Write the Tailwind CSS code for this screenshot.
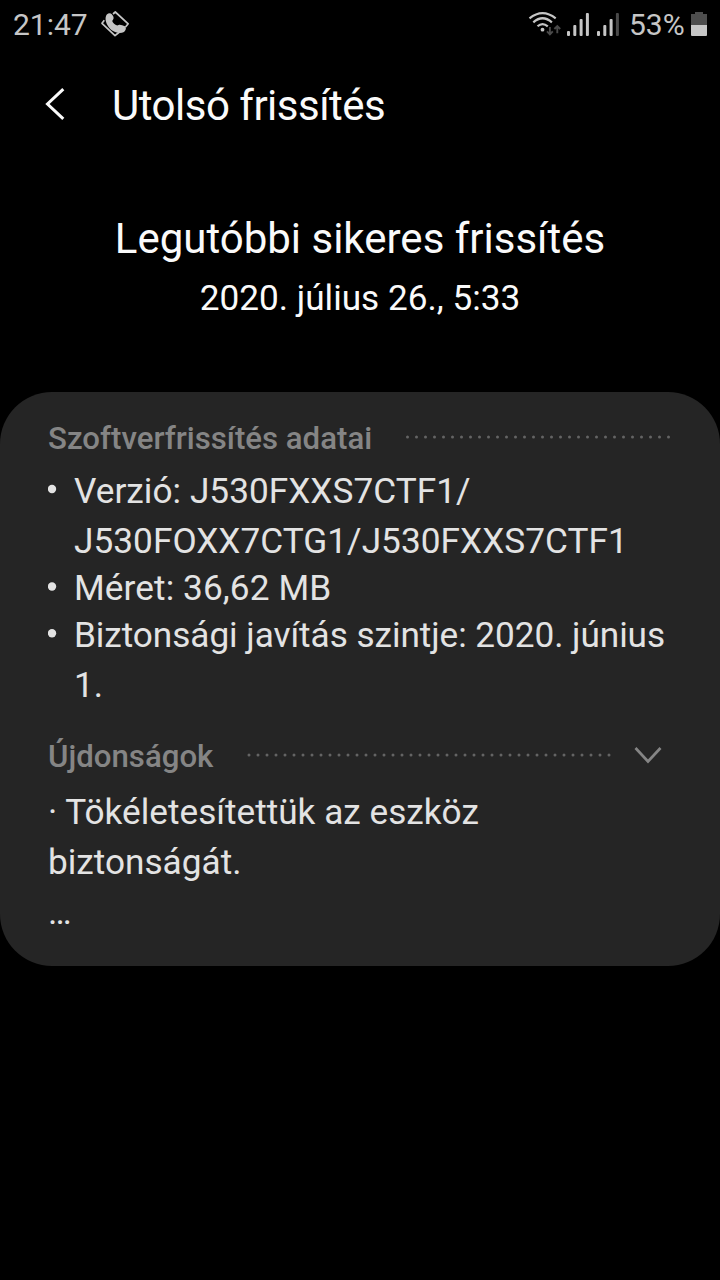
<!DOCTYPE html>
<html lang="hu">
<head>
<meta charset="utf-8">
<title>Utolsó frissítés</title>
<script src="https://cdn.jsdelivr.net/npm/@tailwindcss/browser@4"></script>
</head>
<body class="bg-black">
<div class="flex h-[1280px] w-[720px] flex-col overflow-hidden bg-black font-['Roboto',sans-serif] text-[#fafafa]">
  <div class="flex h-[50px] shrink-0 items-center justify-between pl-[13px] pr-3 text-[30px] leading-[50px] text-[#c6c6c6]">
    <div class="flex h-[50px]">
      <span class="w-[86px]">21:47</span>
      <svg class="h-[50px] w-[32px]" viewBox="99 0 32 50" fill="none">
        <path d="M113 14 115.3 12 128.2 23.8 125.5 27M104.3 20.3 102 23.3 115 35.7 119.5 32" stroke="#c6c6c6" stroke-width="1.7" stroke-linejoin="round"/>
        <path d="M106.8 14.6C108.3 13 110.5 12.8 111.8 14.2C113.6 15.9 114.2 18.3 113 19.8L112.2 21C113 23 114.8 24.6 117.2 25.6L118.6 25C120.5 24.2 122.6 25.8 124.9 26.2C126.6 27.2 126 30.4 124 31.9C119.3 34.6 112 31.8 108.6 27C105.6 22.8 104.5 18 106.8 14.6Z" fill="#c6c6c6"/>
      </svg>
    </div>
    <div class="flex h-[50px]">
      <svg class="h-[50px] w-[101px]" viewBox="528 0 101 50" fill="none">
        <g stroke="#c6c6c6" stroke-width="2.2">
          <path d="M529.5 18.3Q542.5 7.8 555.7 18.3M533.3 22.3Q542.5 14.2 551.9 22.3M537.5 26.3Q542.5 21.8 547.8 26.3"/>
        </g>
        <circle cx="542.5" cy="29.7" r="1.9" fill="#c6c6c6"/>
        <g stroke="#4a4a4a" stroke-width="1.9">
          <path d="M549.9 27V34M547 31.3 549.9 34.3 552.8 31.3M557.3 33.2V26.5M554.4 29 557.3 26 560.2 29"/>
        </g>
        <g fill="#c6c6c6">
          <rect x="567" y="31" width="3" height="5" rx="1"/><rect x="573.3" y="25" width="3" height="11" rx="1"/><rect x="579.6" y="19" width="3" height="17" rx="1"/><rect x="585.9" y="13" width="3" height="23" rx="1"/>
          <rect x="597" y="31" width="3" height="5" rx="1"/><rect x="603.3" y="25" width="3" height="11" rx="1"/><rect x="609.6" y="19" width="3" height="17" rx="1"/>
        </g>
        <rect x="615.9" y="13" width="3" height="23" rx="1" fill="#4a4a4a"/>
      </svg>
      <span class="w-[60px]">53%</span>
      <svg class="h-[50px] w-[19px]" viewBox="689 0 19 50">
        <path d="M695 12h8v2h4v11h-16v-11h4z" fill="#4d4d4d"/>
        <path d="M691 25h16v10q0 1-1 1h-14q-1 0-1-1z" fill="#c6c6c6"/>
      </svg>
    </div>
  </div>

  <header class="flex h-[111px] shrink-0 items-center pl-[42px]">
    <svg class="h-[111px] w-[70px]" viewBox="42 50 70 111" fill="none">
      <path d="M63.3 89.2 47.5 104 63.3 118.8" stroke="#fafafa" stroke-width="3"/>
    </svg>
    <h1 class="text-[42px] leading-[50px] tracking-[-0.5px]">Utolsó frissítés</h1>
  </header>

  <div class="flex h-[231px] shrink-0 flex-col items-center gap-[9px] pt-[53px]">
    <h2 class="text-[42px] leading-[50px]">Legutóbbi sikeres frissítés</h2>
    <p class="text-[35.2px] leading-[50px]">2020. július 26., 5:33</p>
  </div>

  <main class="flex h-[574px] shrink-0 flex-col rounded-[52px] bg-[#252525] px-12 pt-[26px] text-[35.2px] leading-[50px] text-[#e3e3e3]">
    <div class="flex items-center justify-between text-[31.2px] font-medium text-[#858585]">
      <h3 class="h-10 leading-[42px]">Szoftverfrissítés adatai</h3>
      <svg class="h-10 w-[268px]" viewBox="404 418 268 40"><path d="M407.5 437H670" stroke="#646464" stroke-width="3" stroke-linecap="round" stroke-dasharray="0 9"/></svg>
    </div>
    <ul class="mt-2">
      <li class="flex"><svg class="h-[50px] w-[26px] shrink-0" viewBox="48 466 26 50"><circle cx="52" cy="489" r="4.2" fill="#e3e3e3"/></svg><span class="tracking-[0.04px]">Verzió: J530FXXS7CTF1/<br>J530FOXX7CTG1/J530FXXS7CTF1</span></li>
      <li class="flex leading-[44px]"><svg class="h-11 w-[26px] shrink-0" viewBox="48 566 26 44"><circle cx="52" cy="586.5" r="4.2" fill="#e3e3e3"/></svg><span class="tracking-[0.1px]">Méret: 36,62 MB</span></li>
      <li class="flex"><svg class="h-[50px] w-[26px] shrink-0" viewBox="48 610 26 50"><circle cx="52" cy="633.3" r="4.2" fill="#e3e3e3"/></svg><span class="whitespace-nowrap tracking-[-0.06px]">Biztonsági javítás szintje: 2020. június<br>1.</span></li>
    </ul>
    <div class="mt-[26px] flex items-center justify-between text-[31.2px] font-medium text-[#858585]">
      <h3 class="h-10 leading-[42px]">Újdonságok</h3>
      <svg class="h-10 w-[426px]" viewBox="246 736 426 40" fill="none">
        <path d="M249 755H610" stroke="#646464" stroke-width="3" stroke-linecap="round" stroke-dasharray="0 9"/>
        <path d="M635.5 748 648 761.5 660.5 748" stroke="#858585" stroke-width="2.7"/>
      </svg>
    </div>
    <p class="mt-[11px]">· Tökéletesítettük az eszköz<br>biztonságát.<br>…</p>
  </main>
</div>
</body>
</html>
